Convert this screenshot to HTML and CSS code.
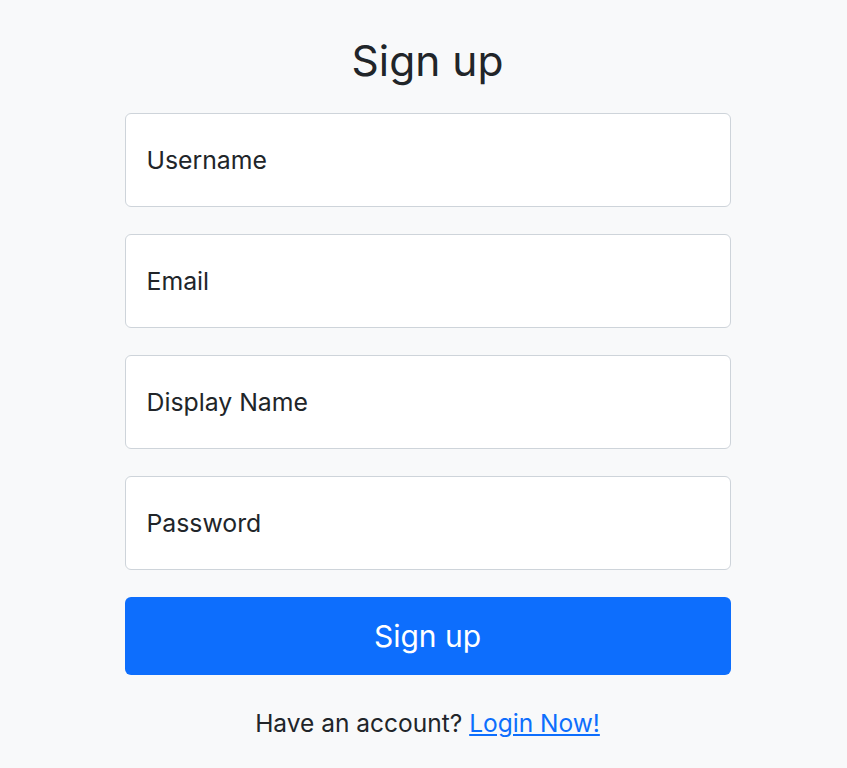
FILE: index.html
```html
<!DOCTYPE html>
<html lang="en">
<head>
  <meta charset="UTF-8">
  <meta name="viewport" content="width=device-width, initial-scale=1.0">
  <title>Sign up</title>
  <link rel="stylesheet" href="styles.css">
</head>
<body>
  <div class="signup-container">
    <h1 class="signup-title">Sign up</h1>

    <form class="signup-form">
      <input type="text" class="form-input" placeholder="Username">
      <input type="email" class="form-input" placeholder="Email">
      <input type="text" class="form-input" placeholder="Display Name">
      <input type="password" class="form-input" placeholder="Password">
      <button type="submit" class="signup-button">Sign up</button>
    </form>

    <p class="login-text">Have an account? <a href="#">Login Now!</a></p>
  </div>
</body>
</html>
```

FILE: styles.css
```css
body {
  font-family: Inter, 'Liberation Sans', sans-serif;
  margin: 0;
  padding: 0 0 0 8px;
  background-color: #f8f9fa;
  color: #212529;
}

.signup-container {
  width: 606px;
  margin: 0 auto;
  padding-top: 31px;
}

.signup-title {
  text-align: center;
  font-size: 42.5px;
  font-weight: 400;
  line-height: 60px;
  margin: 0 0 22px;
}

.signup-form {
  display: flex;
  flex-direction: column;
  gap: 27px;
}

.form-input {
  height: 94px;
  box-sizing: border-box;
  padding: 0 21px;
  border: 1px solid #ced4da;
  border-radius: 6px;
  background-color: white;
  font-family: inherit;
  font-size: 24.8px;
  color: #212529;
  outline: none;
}

.form-input::placeholder {
  color: #212529;
  opacity: 1;
}

.signup-button {
  height: 78px;
  border: none;
  border-radius: 6px;
  background-color: #0d6efd;
  color: white;
  font-family: inherit;
  font-size: 30px;
  cursor: pointer;
}

.login-text {
  text-align: center;
  font-size: 24.5px;
  margin: 33px 0 0;
}

.login-text a {
  color: #0d6efd;
}
```
